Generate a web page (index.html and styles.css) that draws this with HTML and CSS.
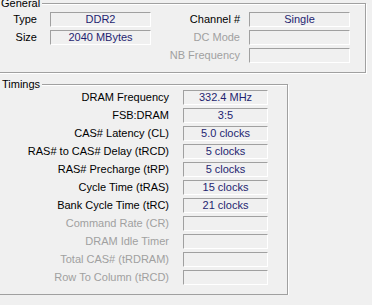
FILE: index.html
```html
<!doctype html>
<html lang="en">
<head>
  <meta charset="utf-8" />
  <title>Memory</title>
  <link rel="stylesheet" href="styles.css">
</head>
<body>
  <div class="group general">
    <div class="group-title">General</div>
    <div class="cols">
      <div class="col col-left">
        <div class="row"><span class="lbl">Type</span><span class="val">DDR2</span></div>
        <div class="row"><span class="lbl">Size</span><span class="val">2040 MBytes</span></div>
      </div>
      <div class="col col-right">
        <div class="row"><span class="lbl">Channel #</span><span class="val">Single</span></div>
        <div class="row off"><span class="lbl">DC Mode</span><span class="val"></span></div>
        <div class="row off"><span class="lbl">NB Frequency</span><span class="val"></span></div>
      </div>
    </div>
  </div>

  <div class="group timings">
    <div class="group-title">Timings</div>
    <div class="col">
      <div class="row"><span class="lbl">DRAM Frequency</span><span class="val">332.4 MHz</span></div>
      <div class="row"><span class="lbl">FSB:DRAM</span><span class="val">3:5</span></div>
      <div class="row"><span class="lbl">CAS# Latency (CL)</span><span class="val">5.0 clocks</span></div>
      <div class="row"><span class="lbl">RAS# to CAS# Delay (tRCD)</span><span class="val">5 clocks</span></div>
      <div class="row"><span class="lbl">RAS# Precharge (tRP)</span><span class="val">5 clocks</span></div>
      <div class="row"><span class="lbl">Cycle Time (tRAS)</span><span class="val">15 clocks</span></div>
      <div class="row"><span class="lbl">Bank Cycle Time (tRC)</span><span class="val">21 clocks</span></div>
      <div class="row off"><span class="lbl">Command Rate (CR)</span><span class="val"></span></div>
      <div class="row off"><span class="lbl">DRAM Idle Timer</span><span class="val"></span></div>
      <div class="row off"><span class="lbl">Total CAS# (tRDRAM)</span><span class="val"></span></div>
      <div class="row off"><span class="lbl">Row To Column (tRCD)</span><span class="val"></span></div>
    </div>
  </div>
</body>
</html>
```

FILE: styles.css
```css
* { box-sizing: border-box; }
html, body { margin:0; padding:0; background:#f0f0f0; }
body { font-family: "Liberation Sans", Arial, sans-serif; font-size:11px; color:#000; padding-top:3px; overflow:hidden; }

/* etched group box, left edge sits off the window */
.group { margin-left:-10px; padding:0 0 9px 10px; border:1px solid #a0a0a0; box-shadow: 1px 1px 0 #fff, inset 1px 1px 0 #fff; }
.group-title { width:max-content; background:#f0f0f0; line-height:13px; padding:0 2px 0 1px; margin:-7px 0 2px -1px; }
.general { width:376px; }
.timings { width:298px; margin-top:11px; }
.timings .group-title { padding-left:2px; margin-bottom:-1px; }

.cols { display:flex; }
.col { display:flex; flex-direction:column; gap:3px; }
.row { display:flex; height:15px; line-height:13px; }
.lbl { text-align:right; white-space:nowrap; padding-top:1px; }
.val { height:15px; border:1px solid #fff; border-top-color:#a0a0a0; border-left-color:#a0a0a0; text-align:center; color:#1f1f70; }
.off .lbl { color:#a0a0a0; }

.col-left { width:150px; }
.col-left .lbl { width:36px; margin-right:13px; }
.col-left .val { width:101px; }
.col-right .lbl { width:89px; margin-right:9px; }
.col-right .val { width:101px; }

.timings .lbl { width:168px; margin-right:14px; }
.timings .val { width:85px; }
```
